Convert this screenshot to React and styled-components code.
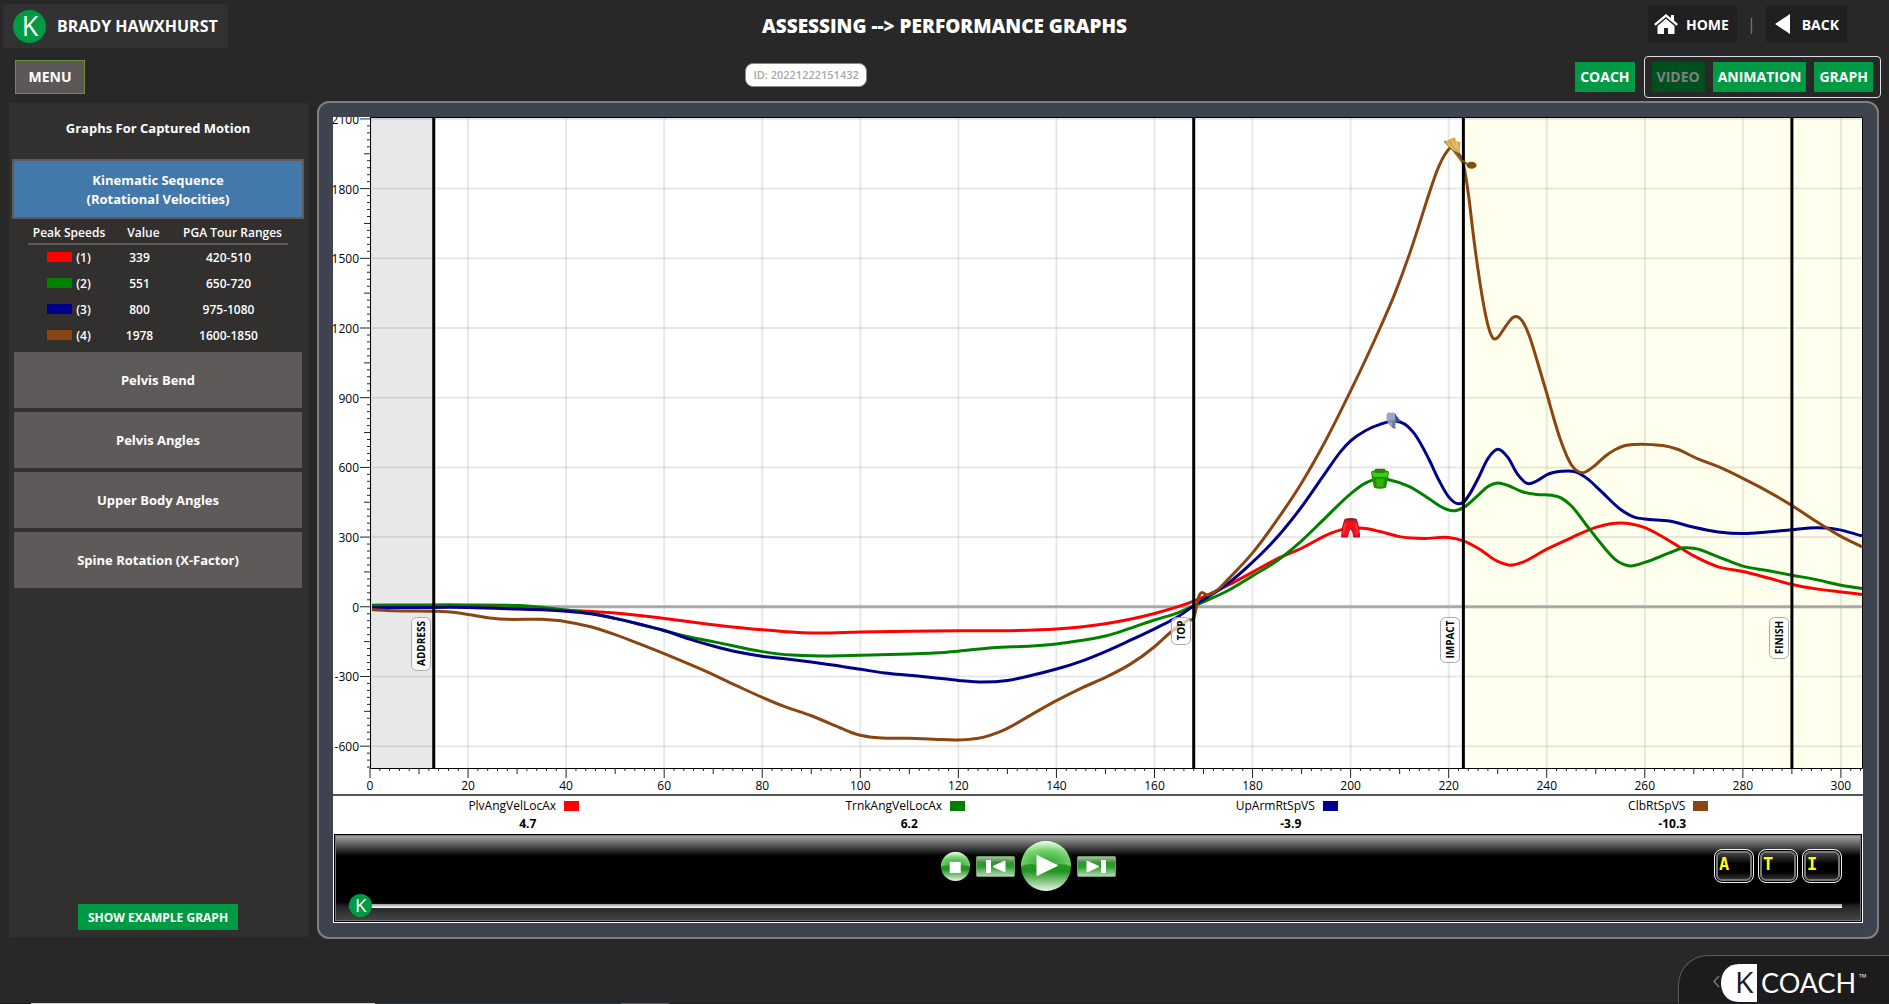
import React, { useState, useEffect, useRef } from 'react';
import styled, { createGlobalStyle } from 'styled-components';

const GlobalStyle = createGlobalStyle`
  * { box-sizing: border-box; }
  body {
    margin: 0;
    background: #282828;
    color: #fff;
    font-family: 'Open Sans', 'Noto Sans', sans-serif;
    font-size: 13px;
  }
  button, input { font-family: inherit; }
`

const Page = styled.div`
  min-height: 100vh;
  display: flex;
  flex-direction: column;
`

const Header = styled.header`
  display: grid;
  grid-template-columns: 1fr auto 1fr;
  align-items: start;
  height: 52px;
  padding: 4px 3px 0;
`

const UserChip = styled.div`
  justify-self: start;
  display: flex;
  align-items: center;
  gap: 11px;
  height: 44px;
  padding: 0 10px;
  border-radius: 3px;
  background: #323232;
  font-size: 16px;
  font-weight: 700;
`

const Title = styled.h1`
  margin: 0;
  font-size: 19px;
  font-weight: 800;
  line-height: 44px;
`

const NavGroup = styled.nav`
  justify-self: end;
  display: flex;
  align-items: center;
  gap: 10px;
  padding: 2px 39px 0 0;
  color: #808080;
  font-size: 16px;
`

const NavLink = styled.a`
  display: flex;
  align-items: center;
  gap: 8px;
  height: 36px;
  padding: 0 8px 0 6px;
  background: #202020;
  color: #fff;
  font-size: 14px;
  font-weight: 700;
  text-decoration: none;
`

const Toolbar = styled.div`
  display: flex;
  align-items: center;
  height: 49px;
  padding: 0 8px 0 15px;
`

const MenuButton = styled.button`
  width: 70px;
  height: 34px;
  padding: 0;
  border: 1px solid #6b9430;
  background: #5c5857;
  color: #fff;
  font-size: 14px;
  font-weight: 700;
`

const IdSlot = styled.div`
  flex: 1;
  display: flex;
  justify-content: center;
  padding: 0 48px 4px 0;
`

const IdPill = styled.div`
  padding: 0 7px;
  border: 1px solid #8a8a8a;
  border-radius: 8px;
  background: #fff;
  color: #a8a8a8;
  font-size: 11px;
  line-height: 22px;
  font-weight: 600;
`

const GreenButton = styled.button`
  height: ${props => (props.$small ? 26 : 30)}px;
  padding: 0 ${props => (props.$small ? 10 : 5)}px;
  border: 0;
  background: #009a44;
  color: #fff;
  font-size: ${props => (props.$small ? 12 : 14)}px;
  font-weight: 700;
  &:disabled {
    background: #00501f;
    color: #808080;
  }
`

const ViewGroup = styled.div`
  display: flex;
  gap: 8px;
  margin-left: 9px;
  padding: 5px 7px;
  border: 1px solid #ddd;
  border-radius: 4px;
`

const Main = styled.main`
  flex: 1;
  display: flex;
  gap: 8px;
  padding: 0 10px 0 9px;
`

const Sidebar = styled.aside`
  width: 300px;
  flex-shrink: 0;
  display: flex;
  flex-direction: column;
  margin: 2px 0;
  padding: 0 7px 7px 5px;
  background: #31302f;
`

const SideTitle = styled.h2`
  margin: 0 0 6px;
  font-size: 13px;
  line-height: 50px;
  font-weight: 700;
  text-align: center;
`

const ActiveGraph = styled.button`
  height: 60px;
  width: 292px;
  margin-left: -2px;
  padding-top: 2px;
  border: 2px solid #5e5a59;
  background: #4278aa;
  color: #fff;
  font-size: 13px;
  line-height: 19px;
  font-weight: 700;
`

const GraphButton = styled.button`
  height: 56px;
  margin-bottom: 4px;
  border: 0;
  background: #5e5a59;
  color: #fff;
  font-size: 13px;
  font-weight: 700;
`

const SpeedTable = styled.table`
  width: 260px;
  margin: 0 14px 4px;
  table-layout: fixed;
  border-collapse: collapse;
  font-size: 12px;
  font-weight: 600;
  text-align: center;
  th {
    width: 82px;
    height: 25px;
    padding: 2px 0 0;
    border-bottom: 2px solid #5e5a59;
    font-weight: 600;
    white-space: nowrap;
  }
  th:nth-child(2) { width: 67px; }
  th:nth-child(3) { width: 111px; }
  td {
    height: 26px;
    padding: 0 8px 0 0;
  }
  td:first-child { padding: 0; }
`

const Swatch = styled.span`
  display: inline-block;
  width: ${props => props.$width}px;
  height: 10px;
  margin-right: ${props => (props.$gap ? 4 : 0)}px;
  background: ${props => props.$color};
`

const ExampleSlot = styled.div`
  margin-top: auto;
  text-align: center;
`

const GraphPanel = styled.section`
  flex: 1;
  min-width: 0;
  display: flex;
  flex-direction: column;
  padding: 14px;
  border: 2px solid #7f7f7f;
  border-radius: 12px;
  background: #3f434f;
`

const ChartBox = styled.div`
  flex: 1 1 400px;
  min-height: 0;
  background: #fff;
  overflow: hidden;
  svg { display: block; }
`

const Legend = styled.div`
  display: grid;
  grid-template-columns: repeat(4, 1fr);
  padding: 1px 4px 0 0;
  border-top: 2px solid #555;
  background: #fff;
  color: #000;
  font-size: 12px;
  line-height: 18px;
  text-align: center;
`

const LegendName = styled.div`
  display: flex;
  align-items: center;
  justify-content: center;
  gap: 8px;
`

const LegendValue = styled.div`
  padding-left: 8px;
  font-weight: 700;
`

const Player = styled.div`
  height: 90px;
  padding: 7px 20px 0 15px;
  border: 1px solid #fff;
  outline: 1px solid #000;
  outline-offset: -2px;
  box-shadow: inset 0 0 0 2px #777;
  background: linear-gradient(#b4b4b4 0, #000 22px, #000 68px, #222 72px, #4a4a4a 100%);
`

const PlayerRow = styled.div`
  display: flex;
  align-items: center;
  height: 50px;
  margin-bottom: 3px;
`

const Transport = styled.div`
  flex: 1;
  display: flex;
  align-items: center;
  justify-content: center;
  gap: 6px;
  padding-right: 6px;
`

const TransportButton = styled.button`
  display: flex;
  padding: 0;
  border: 0;
  background: none;
`

const MarkGroup = styled.div`
  display: flex;
  gap: 4px;
`

const MarkButton = styled.button`
  width: 40px;
  height: 34px;
  padding: 0 0 4px 4px;
  border: 1px solid #eee;
  border-radius: 8px;
  background: linear-gradient(#555 0, #000 14px, #000 22px, #444 100%);
  box-shadow: inset 0 0 0 1px #000, inset 0 0 0 3px #777;
  color: #ff0;
  font-family: 'DejaVu Sans Mono', monospace;
  font-size: 17px;
  font-weight: 700;
  text-align: left;
`

const SliderWrap = styled.div`
  position: relative;
  height: 24px;
`

const Slider = styled.input`
  display: block;
  width: 100%;
  height: 24px;
  margin: 0;
  appearance: none;
  background: linear-gradient(#999, #fff) center / 100% 4px no-repeat;
  &::-webkit-slider-thumb {
    appearance: none;
    width: 23px;
    height: 23px;
    background: transparent;
  }
`

const SliderBadge = styled.span`
  position: absolute;
  top: 0;
  pointer-events: none;
`

const BadgeSvg = styled.svg`
  display: block;
  overflow: visible;
`

const Footer = styled.footer`
  display: flex;
  flex-direction: column;
  padding-top: 16px;
`

const LogoTab = styled.div`
  align-self: flex-end;
  width: 211px;
  height: 48px;
  border: 1px solid #5a5a5a;
  border-width: 1px 0 0 1px;
  border-top-left-radius: 30px;
  background: #1c1c1c;
  svg { display: block; }
`

const Strip = styled.div`
  height: 1px;
  background: linear-gradient(90deg, #1a1a1a 31px, #d0d0d0 31px, #d0d0d0 375px, #26343c 375px, #26343c 621px, #566066 621px, #566066 669px, #1b2126 669px);
`

const speeds = [
  { label: '(1)', color: '#ff0000', value: 339, range: '420-510' },
  { label: '(2)', color: '#008000', value: 551, range: '650-720' },
  { label: '(3)', color: '#00008b', value: 800, range: '975-1080' },
  { label: '(4)', color: '#8b4513', value: 1978, range: '1600-1850' },
]

const graphs = ['Pelvis Bend', 'Pelvis Angles', 'Upper Body Angles', 'Spine Rotation (X-Factor)']

const events = [
  { name: 'ADDRESS', frame: 13, size: 53 },
  { name: 'TOP', frame: 168, size: 27 },
  { name: 'IMPACT', frame: 223, size: 45 },
  { name: 'FINISH', frame: 290, size: 41 },
]

// [frame, degrees per second]
const series = [
  {
    name: 'PlvAngVelLocAx', value: '4.7', color: '#ff0000',
    points: [[0, 4], [20, 0], [30, -6], [40, -15], [50, -27], [60, -50], [70, -77], [80, -99], [90, -113], [100, -109], [110, -105], [120, -103], [130, -103], [140, -96], [150, -73], [160, -29], [168, 24], [175, 93], [180, 149], [185, 206], [190, 252], [196, 317], [198, 331], [200, 340], [203, 337], [206, 324], [210, 302], [215, 294], [220, 298], [223, 284], [226, 252], [230, 195], [232.5, 179], [235, 191], [240, 248], [245, 297], [250, 342], [255, 361], [260, 341], [265, 284], [270, 219], [275, 172], [280, 152], [285, 125], [290, 96], [295, 77], [300, 64], [304.3, 53]],
  },
  {
    name: 'TrnkAngVelLocAx', value: '6.2', color: '#008000',
    points: [[0, 7], [10, 8], [20, 8], [30, 5], [35, -2], [40, -14], [45, -28], [50, -50], [55, -75], [60, -103], [65, -129], [70, -150], [80, -193], [86, -208], [92, -212], [100, -209], [110, -203], [115, -199], [120, -191], [127, -176], [135, -169], [140, -160], [145, -145], [150, -126], [155, -93], [160, -57], [165, -24], [168, 3], [175, 70], [180, 133], [185, 198], [190, 284], [195, 386], [200, 486], [203, 532], [206, 551], [208, 546], [212, 517], [216, 465], [219, 425], [221, 413], [223, 427], [226, 480], [228, 518], [230, 533], [232, 523], [235, 495], [238, 483], [241, 480], [243, 468], [245, 435], [248, 354], [252, 248], [254, 203], [257, 176], [260, 191], [265, 232], [268, 254], [270, 252], [275, 215], [280, 175], [285, 156], [290, 136], [295, 117], [300, 93], [304.3, 79]],
  },
  {
    name: 'UpArmRtSpVS', value: '-3.9', color: '#00008b',
    points: [[0, -4], [10, -3], [20, -3], [30, -10], [40, -19], [45, -30], [50, -50], [55, -75], [60, -102], [65, -138], [70, -169], [75, -195], [80, -213], [85, -225], [90, -238], [100, -269], [105, -285], [110, -295], [115, -305], [120, -317], [125, -324], [130, -317], [135, -295], [140, -268], [145, -235], [150, -193], [155, -145], [160, -95], [165, -40], [168, 4], [175, 100], [180, 192], [185, 299], [190, 430], [195, 581], [198, 669], [200, 714], [203, 758], [206, 785], [209, 800], [211, 787], [213, 745], [216, 634], [218, 545], [220, 473], [222, 443], [223, 450], [224, 476], [226, 552], [228, 638], [230, 678], [232, 645], [234, 572], [236, 531], [238, 542], [240, 568], [243, 583], [246, 580], [248, 556], [251, 499], [255, 420], [258, 385], [260, 378], [265, 369], [270, 342], [275, 322], [280, 315], [285, 322], [290, 332], [295, 340], [297, 339], [300, 330], [304.3, 305]],
  },
  {
    name: 'ClbRtSpVS', value: '-10.3', color: '#8b4513',
    points: [[0, -12], [5, -17], [13, -19], [17, -24], [20, -33], [25, -49], [28, -54], [35, -54], [40, -64], [45, -86], [50, -120], [55, -160], [60, -202], [65, -246], [70, -292], [75, -342], [80, -390], [85, -433], [90, -469], [95, -513], [98, -540], [100, -553], [103, -563], [110, -566], [115, -570], [120, -573], [125, -562], [128, -542], [130, -523], [135, -463], [140, -404], [145, -351], [150, -304], [155, -248], [160, -172], [163, -115], [165, -83], [167, -57], [168, -48], [169, 42], [171, 50], [173, 75], [175, 118], [180, 232], [185, 374], [190, 533], [195, 719], [200, 929], [206, 1200], [209, 1347], [212, 1518], [214, 1646], [216, 1778], [217.8, 1886], [219.2, 1946], [220.3, 1975], [221, 1978], [221.8, 1957], [223, 1907], [224.1, 1764], [225, 1606], [226.2, 1420], [227.3, 1281], [228.1, 1205], [229.1, 1155], [230, 1159], [231.1, 1191], [232.2, 1224], [233.1, 1245], [234.1, 1248], [235, 1231], [236.4, 1169], [238.1, 1055], [240, 919], [241.3, 821], [242.7, 725], [244.1, 649], [245.2, 606], [246.2, 585], [247.4, 577], [248.3, 585], [249.7, 606], [251.8, 646], [253.9, 676], [256, 694], [258.1, 699], [261.6, 698], [263.7, 694], [266.5, 679], [270.7, 638], [275, 603], [280, 553], [283.3, 517], [290, 436], [295, 367], [300, 303], [304.3, 258]],
  },
]

const range = (from, to, step) => {
  const out = []
  for (let n = from; n <= to; n += step) out.push(n)
  return out
}

// smooth path through unevenly spaced samples
const curve = (pts) => {
  const last = pts.length - 1
  const step = (i) => (pts[i + 1][1] - pts[i][1]) / (pts[i + 1][0] - pts[i][0])
  const slope = (i) => {
    if (i === 0) return step(0)
    if (i === last) return step(last - 1)
    const before = pts[i][0] - pts[i - 1][0]
    const after = pts[i + 1][0] - pts[i][0]
    return (step(i - 1) * after + step(i) * before) / (before + after)
  }
  return pts.reduce((d, p, i) => {
    if (i === 0) return `M${p[0]},${p[1]}`
    const q = pts[i - 1]
    const dx = (p[0] - q[0]) / 3
    return `${d}C${q[0] + dx},${q[1] + slope(i - 1) * dx} ${p[0] - dx},${p[1] - slope(i) * dx} ${p[0]},${p[1]}`
  }, '')
}

const useSize = () => {
  const ref = useRef(null)
  const [size, setSize] = useState({ width: 0, height: 0 })
  useEffect(() => {
    const observer = new ResizeObserver(([entry]) => {
      setSize({
        width: Math.floor(entry.contentRect.width),
        height: Math.floor(entry.contentRect.height),
      })
    })
    observer.observe(ref.current)
    return () => observer.disconnect()
  }, [])
  return [ref, size]
}

const tickLength = (n, major, medium) => {
  if (n % major === 0) return 10
  return n % medium === 0 ? 6 : 3
}

const Markers = ({ x, y }) => (
  <g>
    <g transform={`translate(${x(200)},${y(339)})`}>
      <path d="M-6,-9 Q0,-11 6,-9 L7,-4 H-7 Z" fill="#5b3030" />
      <path d="M-6,-8 L6,-8 Q9,0 9,9 L3,9 Q3,4 0,0 Q-3,4 -3,9 L-9,9 Q-9,0 -6,-8Z" fill="#f0101e" stroke="#b50d18" strokeWidth="1" />
      <path d="M-5,-5 Q-7,0 -7,6 M5,-5 Q7,0 7,6" fill="none" stroke="#ff3038" strokeWidth="2" />
    </g>
    <g transform={`translate(${x(206)},${y(551)})`}>
      <path d="M-5,-10 H5 V-7 H-5Z" fill="#555" />
      <path d="M-9,-7 Q-5,-10 0,-8 Q5,-10 9,-7 L8,0 L6,9 Q0,11 -6,9 L-8,0Z" fill="#1f8f00" />
      <path d="M-8,-7 Q0,-4 8,-7 L7,-2 H-7Z" fill="#3bd40c" />
      <path d="M-4,0 H4 L3,8 H-3Z" fill="#32b400" />
    </g>
    <g transform={`translate(${x(209)},${y(800)})`}>
      <path d="M-8,-7 Q-6,-10 -4,-8 Q-1,-10 1,-6 V8 Q-4,7 -6,3 Q-9,-1 -8,-7Z" fill="#8e9cc4" opacity="0.9" />
      <path d="M0,-8 L2,-5 L6,0 L1,2Z" fill="#3a5285" />
      <path d="M-2,0 H0 V8 L-3,6Z" fill="#6c7894" />
    </g>
    <g transform={`translate(${x(221)},${y(1978)})`}>
      <path d="M-9,-6 L-1,2 L9,15" fill="none" stroke="#8b6420" strokeWidth="2" />
      <path d="M-4,-8 L1,-10 L3,-6 L7,-5 L6,6 L1,4 L-6,-2 L-9,-5Z" fill="#d9a750" />
      <path d="M-2,-7 L3,1 M2,-7 L5,3 M-6,-4 L1,3" stroke="#f4d180" strokeWidth="1" />
      <ellipse cx="18" cy="18" rx="5" ry="3.5" fill="#80500f" />
      <path d="M7,12 L14,17" stroke="#80500f" strokeWidth="2" />
    </g>
  </g>
)

const Chart = () => {
  const [ref, { width, height }] = useSize()
  const left = 37
  const right = width - 1
  const bottom = height - 26
  const x = (frame) => left + (frame * (right - left)) / 304.3
  const y = (speed) => 1 + ((2104 - speed) * (bottom - 1)) / 2798

  return (
    <ChartBox ref={ref}>
      {width > 0 && (
        <svg width={width} height={height} role="img" aria-label="Rotational velocities by frame">
          <defs>
            <clipPath id="plot"><rect x={left} y="0" width={right - left} height={bottom} /></clipPath>
          </defs>
          <rect x={left} y="0" width={x(13) - left} height={bottom} fill="#e8e8e8" />
          <rect x={x(223)} y="0" width={right - x(223)} height={bottom} fill="#feffed" />
          <g stroke="#000" strokeOpacity="0.09" strokeWidth="2">
            {range(20, 300, 20).map(n => <path key={n} d={`M${x(n)},0V${bottom}`} />)}
            {range(-600, 2100, 300).map(n => <path key={n} d={`M${left},${y(n)}H${right}`} />)}
          </g>
          <path d={`M${left},${y(0)}H${right}`} stroke="#a9a9a9" strokeWidth="3" />
          <g clipPath="url(#plot)">
            {series.map(s => (
              <path
                key={s.name}
                d={curve(s.points.map(([f, v]) => [x(f), y(v)]))}
                fill="none"
                stroke={s.color}
                strokeWidth="3"
              />
            ))}
            {events.map(e => <path key={e.name} d={`M${x(e.frame)},0V${bottom}`} stroke="#000" strokeWidth="3" />)}
            <Markers x={x} y={y} />
          </g>
          {events.map(e => (
            <g key={e.name} transform={`translate(${Math.round(x(e.frame)) - 23},${Math.round(y(0)) + 10})`}>
              <rect x="0.5" y="0.5" width="19" height={e.size} rx="5" fill="#fff" fillOpacity="0.65" stroke="#aaa" />
              <text transform={`translate(14,${e.size / 2}) rotate(-90)`} textAnchor="middle" fontSize="10" fontWeight="700">{e.name}</text>
            </g>
          ))}
          <path d={`M${left + 1.5},0V${bottom}`} stroke="#f3e08a" />
          <g stroke="#222" fill="none">
            <path d={`M${left},0.5H${right + 0.5}V${bottom + 0.5}H${left + 0.5}V0`} stroke="#000" />
            {range(-690, 2100, 30).map(n => <path key={n} d={`M${left},${y(n)}h-${tickLength(n, 300, 150)}`} />)}
            {range(0, 304, 2).map(n => <path key={n} d={`M${x(n)},${bottom}v${tickLength(n, 20, 10)}`} />)}
          </g>
          <g fontSize="12" fill="#000">
            {range(-600, 2100, 300).map(n => <text key={n} x={left - 11} y={y(n) + 5} textAnchor="end">{n}</text>)}
            {range(0, 300, 20).map(n => <text key={n} x={x(n)} y={height - 4} textAnchor="middle">{n}</text>)}
          </g>
        </svg>
      )}
    </ChartBox>
  )
}

const KBadge = ({ size }) => (
  <BadgeSvg width={size} height={size} viewBox="0 0 33 33" aria-hidden="true">
    <circle cx="16.5" cy="16.5" r="16.5" fill="#009a44" />
    <text x="17" y="26" textAnchor="middle" fontFamily="Open Sans, sans-serif" fontSize="27" fontWeight="400" fill="#fff">K</text>
  </BadgeSvg>
)

const HomeIcon = () => (
  <svg width="24" height="20" viewBox="0 0 24 20" fill="#fff">
    <path d="M12 0L0 10l1.500 1.800L12 3l10.500 8.800L24 10l-4-3.400V1h-3v3z" />
    <path d="M12 4.800L3.500 12V20H10v-6h4v6h6.500v-8z" />
  </svg>
)

const BackIcon = () => (
  <svg width="22" height="20" viewBox="0 0 22 20">
    <path d="M18 0V20L3 10Z" fill="#fff" />
  </svg>
)

const Gloss = () => (
  <defs>
    <linearGradient id="body" x1="0" y1="0" x2="0" y2="1">
      <stop offset="0" stopColor="#7ccf6f" />
      <stop offset="0.4" stopColor="#2a9a28" />
      <stop offset="0.6" stopColor="#1f9420" />
      <stop offset="1" stopColor="#e9f3e6" />
    </linearGradient>
    <radialGradient id="shine" cx="0.5" cy="0.9" r="0.9">
      <stop offset="0" stopColor="#2b9a2b" />
      <stop offset="0.6" stopColor="#77d470" />
      <stop offset="1" stopColor="#f2fff0" />
    </radialGradient>
    <linearGradient id="bar" x1="0" y1="0" x2="0" y2="1">
      <stop offset="0" stopColor="#a9c8a5" />
      <stop offset="0.3" stopColor="#3f8f3c" />
      <stop offset="0.5" stopColor="#23a023" />
      <stop offset="1" stopColor="#c3d6c0" />
    </linearGradient>
  </defs>
)

const RoundIcon = ({ size, children }) => (
  <svg width={size} height={size} viewBox="0 0 50 50">
    <Gloss />
    <circle cx="25" cy="25" r="25" fill="url(#body)" />
    <path d="M0 25A25 25 0 0 1 50 25Q38 21 33 25H17Q12 21 0 25Z" fill="url(#shine)" />
    {children}
  </svg>
)

const SkipIcon = ({ children }) => (
  <svg width="39" height="21" viewBox="0 0 39 21">
    <rect x="0.5" y="0.5" width="38" height="20" rx="1" fill="url(#bar)" stroke="#6f9c6c" />
    <g fill="#fff" stroke="#fff" strokeLinejoin="round">{children}</g>
  </svg>
)

const Logo = () => (
  <svg width="210" height="47" viewBox="0 0 210 47" role="img" aria-label="K Coach">
    <path d="M40 20L35 25.500L40 31" fill="none" stroke="#777" strokeWidth="1.500" />
    <path d="M78 8V46H60C48 46 42 37 42 27S48 8 60 8Z" fill="#fff" />
    <text x="56" y="37" fontFamily="Open Sans, sans-serif" fontSize="30" fill="#1c1c1c">K</text>
    <text x="82" y="37" fontFamily="Lato, sans-serif" fontSize="27" fill="#fff">COACH</text>
    <text x="180" y="25" fontFamily="Open Sans, sans-serif" fontSize="10" fill="#ddd">™</text>
  </svg>
)

const App = () => {
  const [frame, setFrame] = useState(0)

  return (
    <Page>
      <GlobalStyle />
      <Header>
        <UserChip><KBadge size={33} />BRADY HAWXHURST</UserChip>
        <Title>ASSESSING --&gt; PERFORMANCE GRAPHS</Title>
        <NavGroup>
          <NavLink href="#home"><HomeIcon />HOME</NavLink>
          |
          <NavLink href="#back"><BackIcon />BACK</NavLink>
        </NavGroup>
      </Header>
      <Toolbar>
        <MenuButton>MENU</MenuButton>
        <IdSlot><IdPill>ID: 20221222151432</IdPill></IdSlot>
        <GreenButton>COACH</GreenButton>
        <ViewGroup>
          <GreenButton disabled>VIDEO</GreenButton>
          <GreenButton>ANIMATION</GreenButton>
          <GreenButton>GRAPH</GreenButton>
        </ViewGroup>
      </Toolbar>
      <Main>
        <Sidebar>
          <SideTitle>Graphs For Captured Motion</SideTitle>
          <ActiveGraph>Kinematic Sequence<br />(Rotational Velocities)</ActiveGraph>
          <SpeedTable>
            <thead>
              <tr><th>Peak Speeds</th><th>Value</th><th>PGA Tour Ranges</th></tr>
            </thead>
            <tbody>
              {speeds.map(s => (
                <tr key={s.label}>
                  <td><Swatch $color={s.color} $width={25} $gap />{s.label}</td>
                  <td>{s.value}</td>
                  <td>{s.range}</td>
                </tr>
              ))}
            </tbody>
          </SpeedTable>
          {graphs.map(name => <GraphButton key={name}>{name}</GraphButton>)}
          <ExampleSlot><GreenButton $small>SHOW EXAMPLE GRAPH</GreenButton></ExampleSlot>
        </Sidebar>
        <GraphPanel>
          <Chart />
          <Legend>
            {series.map(s => (
              <div key={s.name}>
                <LegendName>{s.name}<Swatch $color={s.color} $width={15} /></LegendName>
                <LegendValue>{s.value}</LegendValue>
              </div>
            ))}
          </Legend>
          <Player>
            <PlayerRow>
              <Transport>
                <TransportButton aria-label="Stop">
                  <RoundIcon size={29}><rect x="15" y="17" width="19" height="19" fill="#fff" /></RoundIcon>
                </TransportButton>
                <TransportButton aria-label="Previous">
                  <SkipIcon><path d="M10.500 4.500h4v12h-4zM29 5v11L17 10.500z" /></SkipIcon>
                </TransportButton>
                <TransportButton aria-label="Play">
                  <RoundIcon size={50}>
                    <path d="M16 14.500V34.500L36.500 24.500Z" fill="#fff" stroke="#fff" strokeLinejoin="round" />
                  </RoundIcon>
                </TransportButton>
                <TransportButton aria-label="Next">
                  <SkipIcon><path d="M24.500 4.500h4v12h-4zM10 5v11L22 10.500z" /></SkipIcon>
                </TransportButton>
              </Transport>
              <MarkGroup>
                <MarkButton>A</MarkButton>
                <MarkButton>T</MarkButton>
                <MarkButton>I</MarkButton>
              </MarkGroup>
            </PlayerRow>
            <SliderWrap>
              <Slider
                type="range"
                min="0"
                max="304"
                value={frame}
                aria-label="Frame"
                onChange={e => setFrame(Number(e.target.value))}
              />
              <SliderBadge style={{ left: `calc((100% - 23px) * ${frame / 304})` }}><KBadge size={23} /></SliderBadge>
            </SliderWrap>
          </Player>
        </GraphPanel>
      </Main>
      <Footer>
        <LogoTab><Logo /></LogoTab>
        <Strip />
      </Footer>
    </Page>
  )
}

export default App
